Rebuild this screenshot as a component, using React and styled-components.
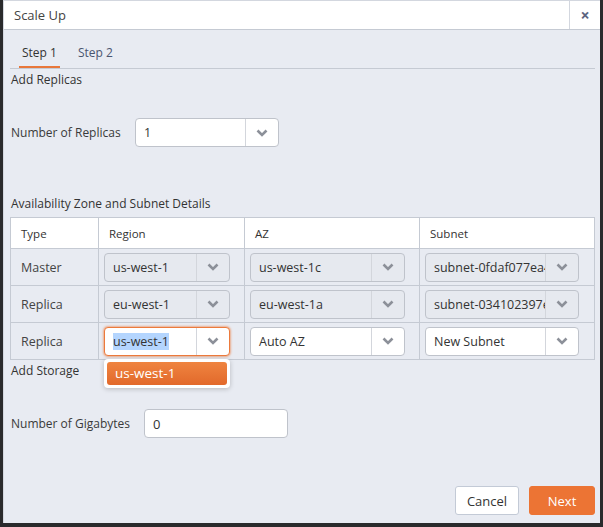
import React from "react"
import styled, { createGlobalStyle } from "styled-components"

//Styles
const GlobalStyle = createGlobalStyle`
  body {
    margin: 0;
    background: #2a2a2c;
    font-family: "Open Sans", "Liberation Sans", sans-serif;
    font-size: 12px;
    color: #333;
  }
`
const Modal = styled.div`
  width: 597px;
  height: 523px;
  margin-left: 3px;
  background: #e8ebf2;
  display: flex;
  flex-direction: column;
  box-sizing: border-box;
  border-left: 1px solid #d3d7df;
`
const Header = styled.div`
  height: 30px;
  display: flex;
  background: #fff;
  border-top: 1px solid #d3d7df;
  border-bottom: 1px solid #c5cad3;
  box-sizing: border-box;
`
const Title = styled.div`
  flex: 1;
  display: flex;
  align-items: center;
  padding-left: 10px;
  font-size: 13px;
  color: #444;
`
const Close = styled.div`
  width: 30px;
  display: flex;
  align-items: center;
  justify-content: center;
  border-left: 1px solid #d3d7df;
  color: #5b6480;
  font-size: 16px;
  font-weight: 700;
`
const Content = styled.div`
  flex: 1;
  display: flex;
  flex-direction: column;
  padding: 0 5px 8px 6px;
`
const Tabs = styled.div`
  height: 38px;
  display: flex;
  align-items: flex-end;
  border-bottom: 1px solid #c5cad3;
  padding-left: 9px;
  gap: 15px;
`
const Tab = styled.div`
  height: 36px;
  padding: 6px 3px 0;
  display: flex;
  align-items: center;
  box-sizing: border-box;
  color: ${props => (props.active ? "#333" : "#4a5570")};
  border-bottom: 2px solid ${props => (props.active ? "#e8773a" : "transparent")};
`
const SectionTitle = styled.div`
  line-height: 18px;
  padding-left: 1px;
  margin-top: ${props => props.top || 0}px;
`
const FieldRow = styled.div`
  display: flex;
  align-items: center;
  margin-top: ${props => props.top}px;
  padding-left: 1px;
`
const Label = styled.div`
  width: ${props => props.width}px;
  color: #3a3a3a;
`
const Select = styled.div`
  position: relative;
  width: ${props => props.width}px;
  height: ${props => props.height || 29}px;
  box-sizing: border-box;
  display: flex;
  align-items: stretch;
  border: 1px solid ${props => (props.focused ? "#ec7a3c" : "#bfc3cb")};
  border-radius: 4px;
  background: ${props => (props.disabled ? "#e6e9ef" : "#fff")};
  box-shadow: ${props => (props.focused ? "0 0 2px 1px rgba(236,122,60,0.55)" : "none")};
`
const SelectValue = styled.div`
  flex: 1;
  min-width: 0;
  display: flex;
  align-items: center;
  padding-left: 8px;
  overflow: hidden;
  white-space: nowrap;
  font-size: 12.5px;
  color: #333;
`
const Highlight = styled.span`
  background: #b4d5fe;
`
const Arrow = styled.div`
  width: 32px;
  flex-shrink: 0;
  display: flex;
  align-items: center;
  justify-content: center;
  border-left: 1px solid #d3d6dc;
`
const Menu = styled.div`
  position: absolute;
  top: 31px;
  left: -1px;
  width: 126px;
  padding: 3px;
  box-sizing: border-box;
  background: #fff;
  border-radius: 4px;
  box-shadow: 0 1px 5px rgba(0, 0, 0, 0.22);
  z-index: 2;
`
const MenuItem = styled.div`
  height: 23px;
  display: flex;
  align-items: center;
  padding-left: 8px;
  border-radius: 3px;
  font-size: 13.5px;
  color: #fff;
  background: linear-gradient(#ef8440, #e2692b);
`
const Table = styled.div`
  margin-top: 4px;
  width: 585px;
  display: grid;
  grid-template-columns: 88px 146px 175px 175px;
  border: 1px solid #c5cad3;
  border-right: 0;
  border-bottom: 0;
  box-sizing: border-box;
`
const Cell = styled.div`
  height: ${props => (props.head ? 31 : 37)}px;
  box-sizing: border-box;
  display: flex;
  align-items: center;
  padding-left: ${props => (props.text ? 10 : 5)}px;
  border-right: 1px solid #c5cad3;
  border-bottom: 1px solid #c5cad3;
  background: ${props => (props.head ? "#fff" : "transparent")};
  font-size: ${props => (props.head ? 11.5 : 12.5)}px;
  color: ${props => (props.head ? "#333" : "#444")};
`
const Input = styled.div`
  width: 144px;
  height: 29px;
  box-sizing: border-box;
  border: 1px solid #bfc3cb;
  border-radius: 4px;
  background: #fff;
  display: flex;
  align-items: center;
  padding-left: 8px;
  font-size: 13px;
`
const Footer = styled.div`
  margin-top: auto;
  display: flex;
  justify-content: flex-end;
  gap: 10px;
`
const Button = styled.div`
  height: 29px;
  width: ${props => props.width}px;
  box-sizing: border-box;
  display: flex;
  align-items: center;
  justify-content: center;
  border-radius: 3px;
  font-size: 13px;
  border: 1px solid ${props => (props.primary ? "#ec7434" : "#c3cad6")};
  background: ${props => (props.primary ? "#ec7434" : "#fff")};
  color: ${props => (props.primary ? "#fff" : "#333")};
`

const Chevron = () => (
  <svg width="12" height="8" viewBox="0 0 12 8">
    <path d="M1.5 1.5 L6 6 L10.5 1.5" fill="none" stroke="#8c9099" strokeWidth="2.6" />
  </svg>
)

const Dropdown = ({ width, disabled, focused, children, menu }) => (
  <Select width={width} disabled={disabled} focused={focused}>
    <SelectValue>{children}</SelectValue>
    <Arrow>
      <Chevron />
    </Arrow>
    {menu && (
      <Menu>
        <MenuItem>{menu}</MenuItem>
      </Menu>
    )}
  </Select>
)

const rows = [
  { type: "Master", region: "us-west-1", az: "us-west-1c", subnet: "subnet-0fdaf077ea4f", disabled: true },
  { type: "Replica", region: "eu-west-1", az: "eu-west-1a", subnet: "subnet-034102397e4c", disabled: true },
]

const App = () => (
  <>
    <GlobalStyle />
    <Modal>
      <Header>
        <Title>Scale Up</Title>
        <Close>×</Close>
      </Header>
      <Content>
        <Tabs>
          <Tab active>Step 1</Tab>
          <Tab>Step 2</Tab>
        </Tabs>
        <SectionTitle top={2}>Add Replicas</SectionTitle>
        <FieldRow top={29}>
          <Label width={124}>Number of Replicas</Label>
          <Dropdown width={144}>1</Dropdown>
        </FieldRow>
        <SectionTitle top={48}>Availability Zone and Subnet Details</SectionTitle>
        <Table>
          <Cell head text>Type</Cell>
          <Cell head text>Region</Cell>
          <Cell head text>AZ</Cell>
          <Cell head text>Subnet</Cell>
          {rows.map(r => (
            <React.Fragment key={r.region}>
              <Cell text>{r.type}</Cell>
              <Cell>
                <Dropdown width={126} disabled>{r.region}</Dropdown>
              </Cell>
              <Cell>
                <Dropdown width={155} disabled>{r.az}</Dropdown>
              </Cell>
              <Cell>
                <Dropdown width={154} disabled>{r.subnet}</Dropdown>
              </Cell>
            </React.Fragment>
          ))}
          <Cell text>Replica</Cell>
          <Cell>
            <Dropdown width={126} focused menu="us-west-1">
              <Highlight>us-west-1</Highlight>
            </Dropdown>
          </Cell>
          <Cell>
            <Dropdown width={155}>Auto AZ</Dropdown>
          </Cell>
          <Cell>
            <Dropdown width={154}>New Subnet</Dropdown>
          </Cell>
        </Table>
        <SectionTitle top={2}>Add Storage</SectionTitle>
        <FieldRow top={29}>
          <Label width={133}>Number of Gigabytes</Label>
          <Input>0</Input>
        </FieldRow>
        <Footer>
          <Button width={64}>Cancel</Button>
          <Button width={66} primary>Next</Button>
        </Footer>
      </Content>
    </Modal>
  </>
)

export default App
